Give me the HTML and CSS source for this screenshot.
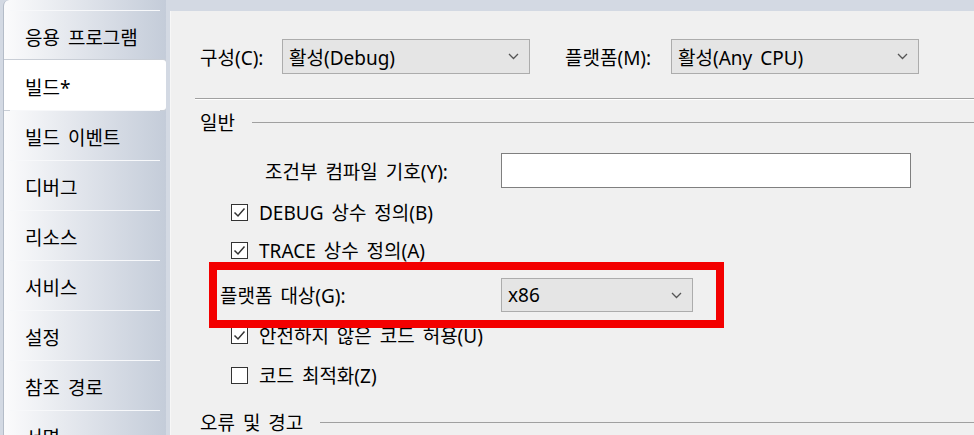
FILE: index.html
```html
<!DOCTYPE html>
<html lang="ko">
<head>
  <meta charset="UTF-8" />
  <title>빌드 속성</title>
  <link rel="stylesheet" href="styles.css">
</head>
<body>
  <div class="window">
    <nav class="sidebar">
      <div class="tab">응용 프로그램</div>
      <div class="tab active">빌드*</div>
      <div class="tab">빌드 이벤트</div>
      <div class="tab">디버그</div>
      <div class="tab">리소스</div>
      <div class="tab">서비스</div>
      <div class="tab">설정</div>
      <div class="tab">참조 경로</div>
      <div class="tab">서명</div>
    </nav>

    <main class="panel">
      <div class="config-row">
        <label class="config-label">구성(C):</label>
        <div class="combo wide">
          <span>활성(Debug)</span>
          <svg class="chevron" width="11" height="7" viewBox="0 0 11 7"><path d="M1 1 L5.5 5.5 L10 1" /></svg>
        </div>
        <label class="config-label platform">플랫폼(M):</label>
        <div class="combo wide">
          <span>활성(Any CPU)</span>
          <svg class="chevron" width="11" height="7" viewBox="0 0 11 7"><path d="M1 1 L5.5 5.5 L10 1" /></svg>
        </div>
      </div>

      <hr class="divider">

      <div class="group-title"><span>일반</span></div>

      <div class="field symbols">
        <label>조건부 컴파일 기호(Y):</label>
        <div class="textbox"></div>
      </div>

      <div class="check debug">
        <svg class="box" width="17" height="17" viewBox="0 0 17 17"><rect x="0.5" y="0.5" width="16" height="16" /><path d="M3.5 8.5 L7 12 L13.5 4.5" /></svg>
        <span>DEBUG 상수 정의(B)</span>
      </div>
      <div class="check trace">
        <svg class="box" width="17" height="17" viewBox="0 0 17 17"><rect x="0.5" y="0.5" width="16" height="16" /><path d="M3.5 8.5 L7 12 L13.5 4.5" /></svg>
        <span>TRACE 상수 정의(A)</span>
      </div>

      <div class="field target">
        <label>플랫폼 대상(G):</label>
        <div class="combo narrow">
          <span>x86</span>
          <svg class="chevron" width="11" height="7" viewBox="0 0 11 7"><path d="M1 1 L5.5 5.5 L10 1" /></svg>
        </div>
        <div class="callout"></div>
      </div>

      <div class="check unsafe">
        <svg class="box" width="17" height="17" viewBox="0 0 17 17"><rect x="0.5" y="0.5" width="16" height="16" /><path d="M3.5 8.5 L7 12 L13.5 4.5" /></svg>
        <span>안전하지 않은 코드 허용(U)</span>
      </div>
      <div class="check optimize">
        <svg class="box" width="17" height="17" viewBox="0 0 17 17"><rect x="0.5" y="0.5" width="16" height="16" /></svg>
        <span>코드 최적화(Z)</span>
      </div>

      <div class="group-title errors"><span>오류 및 경고</span></div>
    </main>
  </div>
</body>
</html>
```

FILE: styles.css
```css
body {
  margin: 0;
  background: #d3d9e3;
  font-family: "Noto Sans", "Noto Sans CJK KR", sans-serif;
  font-size: 19px;
  color: #000;
  word-spacing: 3px;
  overflow: hidden;
}

.window {
  display: flex;
  height: 435px;
  overflow: hidden;
}

/* left tab list */
.sidebar {
  width: 162px;
  margin-left: 3px;
  margin-right: 4px;
  padding-top: 10px;
  border-left: 1px solid #b4bcc8;
  border-top-left-radius: 6px;
  background: linear-gradient(to right, #fbfbfc, #c4ccd9);
  overflow: hidden;
}

.tab {
  height: 50px;
  box-sizing: border-box;
  padding: 3px 0 0 21px;
  display: flex;
  align-items: center;
  background: linear-gradient(#f7f8fa, #f7f8fa) no-repeat 6px 0 / 150px 1px;
}

.tab.active {
  margin-left: -4px;
  padding-left: 21px;
  background: #fff;
  border-left: 4px solid #3d8ad6;
  border-radius: 3px;
  box-shadow: 0 0 0 1px #c9ced6;
}

/* right property page */
.panel {
  flex: 1;
  margin-top: 11px;
  padding: 28px 0 0 29px;
  background: #f0f0f0;
  border-left: 1px solid #f7f7f7;
}

.config-row {
  display: flex;
  align-items: center;
  height: 35px;
}

.config-label {
  width: 82px;
}

.config-label.platform {
  margin-left: 35px;
  width: 106px;
}

.combo {
  height: 35px;
  box-sizing: border-box;
  display: flex;
  align-items: center;
  justify-content: space-between;
  padding: 0 10px 0 6px;
  background: #e5e5e5;
  border: 1px solid #acacac;
}

.combo.wide {
  width: 248px;
}

.combo.narrow {
  width: 192px;
  height: 34px;
}

.chevron path {
  fill: none;
  stroke: #555;
  stroke-width: 1.3;
}

.divider {
  margin: 24px 0 0 -5px;
  height: 0;
  border: none;
  border-top: 1px solid #a0a0a0;
  border-bottom: 1px solid #fff;
}

.group-title {
  display: flex;
  align-items: center;
  height: 24px;
  margin-top: 10px;
}

.group-title::after {
  content: "";
  flex: 1;
  height: 1px;
  margin: 0 0 0 17px;
  background: #a0a0a0;
}

.group-title.errors {
  margin-top: 23px;
}

.field {
  display: grid;
  grid-template-columns: 301px auto;
  align-items: center;
}

.field.symbols {
  margin-top: 19px;
}

.field.symbols label {
  padding-left: 65px;
}

.textbox {
  width: 410px;
  height: 35px;
  box-sizing: border-box;
  background: #fff;
  border: 1px solid #7f7f7f;
}

.field.target {
  position: relative;
  margin-top: 16px;
}

.field.target label {
  padding-left: 20px;
}

/* red highlight drawn over the page */
.callout {
  position: absolute;
  top: -16px;
  bottom: -16px;
  left: 9px;
  width: 515px;
  box-sizing: border-box;
  border: 8px solid #f30000;
  z-index: 2;
}

.check {
  display: flex;
  align-items: center;
  gap: 11px;
  height: 24px;
  margin-left: 31px;
}

.check .box rect {
  fill: #fff;
  stroke: #333;
}

.check .box path {
  fill: none;
  stroke: #333;
  stroke-width: 1.5;
}

.check.debug { margin-top: 12px; }
.check.trace { margin-top: 14px; }
.check.unsafe { margin-top: 11px; }
.check.optimize { margin-top: 16px; }
```
